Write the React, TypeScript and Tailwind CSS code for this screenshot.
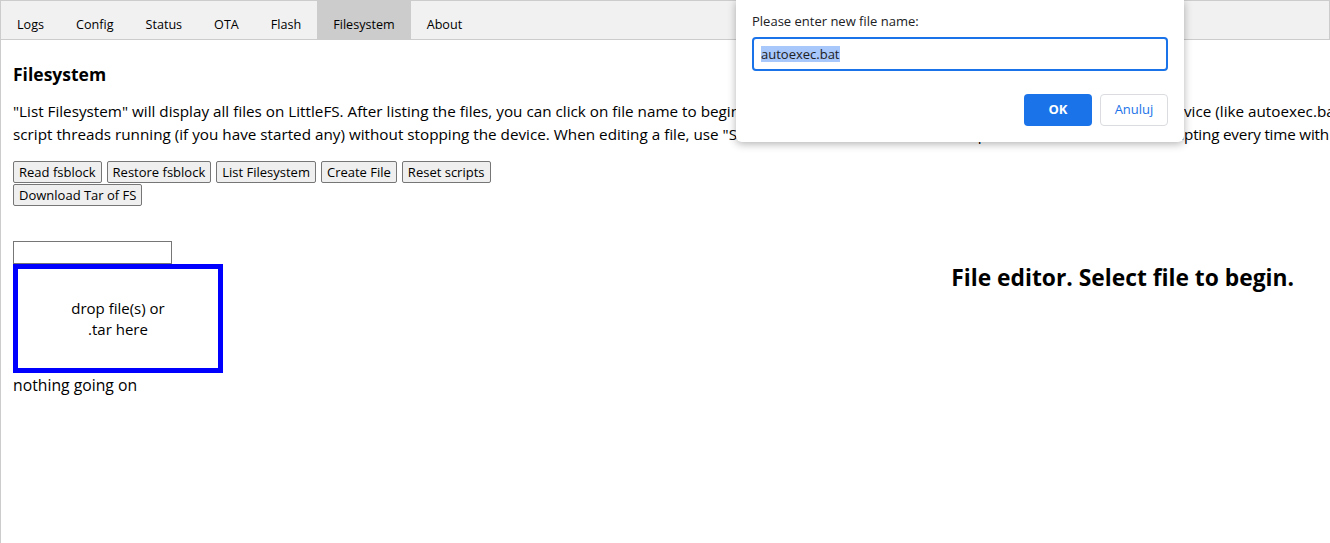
const tabs = ["Logs", "Config", "Status", "OTA", "Flash", "Filesystem", "About"];

const firstRow = ["Read fsblock", "Restore fsblock", "List Filesystem", "Create File", "Reset scripts"];

function TabBar() {
	return (
		<div className="flex h-10 border border-[#ccc] bg-[#f1f1f1]">
			{tabs.map((t) => (
				<button
					key={t}
					className={
						"px-4 pt-[10px] text-[12.6px] text-black " + (t === "Filesystem" ? "bg-[#ccc]" : "bg-transparent")
					}
				>
					{t}
				</button>
			))}
		</div>
	);
}

function PromptDialog() {
	return (
		<div className="absolute left-[736px] top-0 h-[142px] w-[448px] rounded-b-md bg-white px-4 pt-3 shadow-[0_2px_8px_rgba(0,0,0,0.3)]">
			<div className="text-[13px] text-[#202124]">Please enter new file name:</div>
			<div className="mt-[5px] flex h-[34px] items-center rounded-[4px] border-2 border-[#1a73e8] px-[7px]">
				<span className="bg-[#a8c7fa] text-[13px] leading-4 text-[#202124]">autoexec.bat</span>
			</div>
			<div className="mt-[23px] flex justify-end gap-2">
				<button className="h-8 w-[68px] rounded-[4px] bg-[#1a73e8] text-[13px] font-bold text-white">OK</button>
				<button className="h-8 w-[68px] rounded-[4px] border border-[#dadce0] bg-white text-[13px] text-[#1a73e8]">
					Anuluj
				</button>
			</div>
		</div>
	);
}

function ActionButton({ label }: { label: string }) {
	return (
		<button className="h-[22px] rounded-[2px] border border-[#767676] bg-[#efefef] px-[5px] text-[13px] leading-none">
			{label}
		</button>
	);
}

export default function App() {
	return (
		<div className="relative h-[543px] w-[1330px] overflow-hidden bg-white font-['Open_Sans',sans-serif] text-black">
			<TabBar />
			<div className="h-[503px] border-l border-[#ccc] px-3 pt-[22px]">
				<h3 className="text-[17.5px] font-bold leading-6">Filesystem</h3>
				<div className="mt-[14px] whitespace-nowrap text-[15.25px] leading-[23px]">
					<div className="flex">
						<span className="w-[1171px] shrink-0 overflow-hidden">
							"List Filesystem" will display all files on LittleFS. After listing the files, you can click on file name to begin editing it. You can also create a startup script that runs on boot of the de
						</span>
						<span>vice (like autoexec.bat) and more</span>
					</div>
					<div className="flex">
						<span className="w-[1171px] shrink-0 overflow-hidden">
							script threads running (if you have started any) without stopping the device. When editing a file, use "Save, Reset SVM and run file as script" to test it without rebooting and interru
						</span>
						<span className="tracking-[-0.2px]">pting every time with</span>
					</div>
				</div>
				<div className="mt-[15px] flex flex-col gap-y-px">
					<div className="flex gap-x-[5px]">
						{firstRow.map((a) => (
							<ActionButton key={a} label={a} />
						))}
					</div>
					<div className="flex">
						<ActionButton label="Download Tar of FS" />
					</div>
				</div>
				<div className="flex items-start pt-[35px]">
					<div className="flex flex-col">
						<input className="h-[23px] w-[159px] border border-[#767676] bg-white" />
						<div className="flex h-[109px] w-[210px] items-center justify-center border-[5px] border-[#0000ff] text-center text-[15px] leading-[21px]">
							drop file(s) or
							<br />
							.tar here
						</div>
						<div className="text-[15.75px] leading-6">nothing going on</div>
					</div>
					<div className="ml-auto mr-[24px] mt-[23px] text-[22.8px] font-bold leading-7">File editor. Select file to begin.</div>
				</div>
			</div>
			<PromptDialog />
		</div>
	);
}
